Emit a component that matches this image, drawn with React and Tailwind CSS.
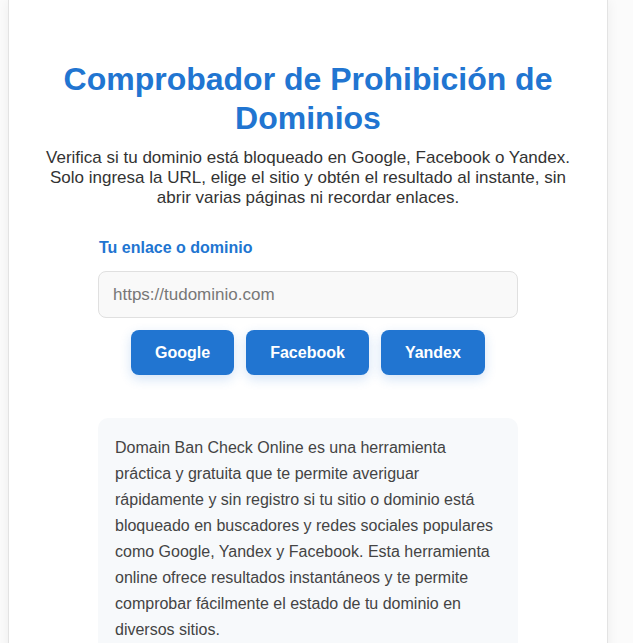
export default function App() {
  return (
    <div className="min-h-screen bg-[#fbfbfb] font-['Liberation_Sans',Arial,sans-serif]">
      <div className="ml-2 w-[600px] min-h-[643px] bg-white border-x border-[#e3e3e3] shadow-[0_0_12px_rgba(0,0,0,0.06)] px-8 pt-[60px] pb-10">
        <h1 className="text-center text-[32px] leading-[39px] font-bold text-[#2175d1]">
          Comprobador de Prohibición de Dominios
        </h1>
        <p className="mt-[10px] text-center text-[17px] leading-[20px] text-[#333]">
          Verifica si tu dominio está bloqueado en Google, Facebook o Yandex. Solo ingresa la URL, elige el sitio y obtén el resultado al instante, sin abrir varias páginas ni recordar enlaces.
        </p>

        <div className="mx-auto mt-[30px] w-[420px]">
          <label className="block pl-px text-[16px] leading-[20px] font-bold text-[#2175d1]">Tu enlace o dominio</label>
          <input
            type="text"
            placeholder="https://tudominio.com"
            className="mt-[13px] block h-[47px] w-full rounded-lg border border-[#e0e0e0] bg-[#f9f9f9] px-[14px] text-[17px] text-[#333] placeholder:text-[#777] outline-none"
          />
          <div className="mt-[12px] flex justify-center gap-3">
            {['Google', 'Facebook', 'Yandex'].map((name) => (
              <button
                key={name}
                className="h-[45px] rounded-lg bg-[#2175d1] px-[24px] text-[16px] font-bold text-white shadow-[0_4px_12px_rgba(33,117,209,0.2)]"
              >
                {name}
              </button>
            ))}
          </div>

          <div className="mt-[43px] rounded-[10px] bg-[#f7f9fb] px-[17px] pt-[17px] pb-4 text-[16px] leading-[26px] text-[#444]">
            Domain Ban Check Online es una herramienta práctica y gratuita que te permite averiguar rápidamente y sin registro si tu sitio o dominio está bloqueado en buscadores y redes sociales populares como Google, Yandex y Facebook. Esta herramienta online ofrece resultados instantáneos y te permite comprobar fácilmente el estado de tu dominio en diversos sitios.
          </div>
        </div>
      </div>
    </div>
  )
}
